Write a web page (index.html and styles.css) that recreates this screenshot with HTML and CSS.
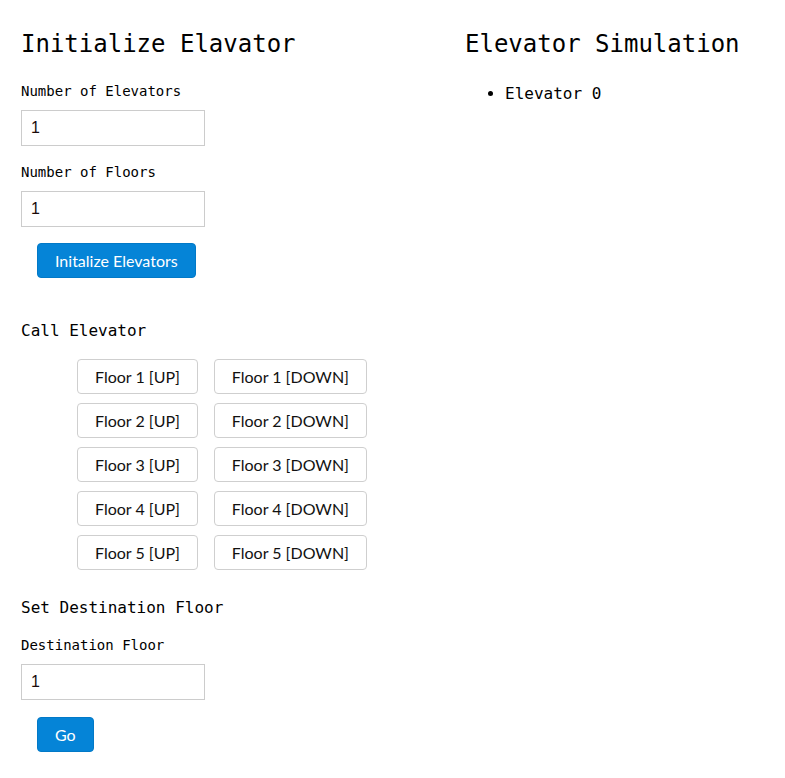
FILE: index.html
```html
<!DOCTYPE html>
<html lang="en">
<head>
<meta charset="utf-8">
<title>Elevator Simulation</title>
<link rel="stylesheet" href="styles.css">
</head>
<body>
<div class="page">
  <section class="col-left">
    <h2 class="title">Initialize Elavator</h2>
    <label class="label label-first">Number of Elevators</label>
    <input class="input" type="text" value="1">
    <label class="label">Number of Floors</label>
    <input class="input" type="text" value="1">
    <div class="actions">
      <button class="btn btn-primary" type="button">Initalize Elevators</button>
    </div>

    <h4 class="subtitle subtitle-call">Call Elevator</h4>
    <ul class="floor-list">
      <li class="floor-row"><button class="btn btn-default" type="button">Floor 1 [UP]</button><button class="btn btn-default" type="button">Floor 1 [DOWN]</button></li>
      <li class="floor-row"><button class="btn btn-default" type="button">Floor 2 [UP]</button><button class="btn btn-default" type="button">Floor 2 [DOWN]</button></li>
      <li class="floor-row"><button class="btn btn-default" type="button">Floor 3 [UP]</button><button class="btn btn-default" type="button">Floor 3 [DOWN]</button></li>
      <li class="floor-row"><button class="btn btn-default" type="button">Floor 4 [UP]</button><button class="btn btn-default" type="button">Floor 4 [DOWN]</button></li>
      <li class="floor-row"><button class="btn btn-default" type="button">Floor 5 [UP]</button><button class="btn btn-default" type="button">Floor 5 [DOWN]</button></li>
    </ul>

    <h4 class="subtitle subtitle-dest">Set Destination Floor</h4>
    <label class="label label-dest">Destination Floor</label>
    <input class="input" type="text" value="1">
    <div class="actions actions-go">
      <button class="btn btn-primary" type="button">Go</button>
    </div>
  </section>

  <section class="col-right">
    <h2 class="title">Elevator Simulation</h2>
    <ul class="elevator-list">
      <li>Elevator 0</li>
    </ul>
  </section>
</div>
</body>
</html>
```

FILE: styles.css
```css
html, body {
  margin: 0;
  padding: 0;
  background: #ffffff;
}

body {
  font-family: "DejaVu Sans Mono", "Liberation Mono", monospace;
  color: #000000;
}

.page {
  display: grid;
  grid-template-columns: 444px 1fr;
  padding: 30px 0 20px 21px;
}

.title {
  margin: 0;
  font-size: 24px;
  line-height: 28px;
  font-weight: normal;
}

.label {
  display: block;
  margin-top: 18px;
  font-size: 14px;
  line-height: 17px;
}

.label-first {
  margin-top: 25px;
}

.label-dest {
  margin-top: 20px;
}

.input {
  display: block;
  box-sizing: border-box;
  width: 184px;
  height: 36px;
  margin: 10px 0 0 0;
  padding: 0 9px;
  border: 1px solid #cccccc;
  border-radius: 0;
  font-family: "Liberation Sans", Arial, sans-serif;
  font-size: 16px;
  color: #1a0a0a;
  background: #ffffff;
  outline: none;
}

.actions {
  display: flex;
  margin-top: 16px;
}

.actions-go {
  margin-top: 17px;
}

.btn {
  box-sizing: border-box;
  display: inline-flex;
  align-items: center;
  justify-content: center;
  height: 35px;
  margin: 0 0 0 16px;
  padding: 0 17px;
  border-radius: 4px;
  font-family: Lato, "Noto Sans", sans-serif;
  font-size: 16px;
  white-space: nowrap;
  cursor: pointer;
}

.btn-primary {
  background: #0584d7;
  border: 1px solid #0279c7;
  color: #ffffff;
}

.btn-default {
  background: #ffffff;
  border: 1px solid #cfcfcf;
  color: #111111;
}

.subtitle {
  margin: 0;
  font-size: 16px;
  line-height: 19px;
  font-weight: normal;
}

.subtitle-call {
  margin-top: 43px;
}

.subtitle-dest {
  margin-top: 28px;
}

.floor-list {
  list-style: none;
  margin: 19px 0 0 0;
  padding: 0 0 0 40px;
  display: flex;
  flex-direction: column;
  gap: 9px;
}

.floor-row {
  display: flex;
}

.elevator-list {
  margin: 26px 0 0 0;
  padding: 0 0 0 40px;
  font-size: 16px;
  line-height: 19px;
}
```
